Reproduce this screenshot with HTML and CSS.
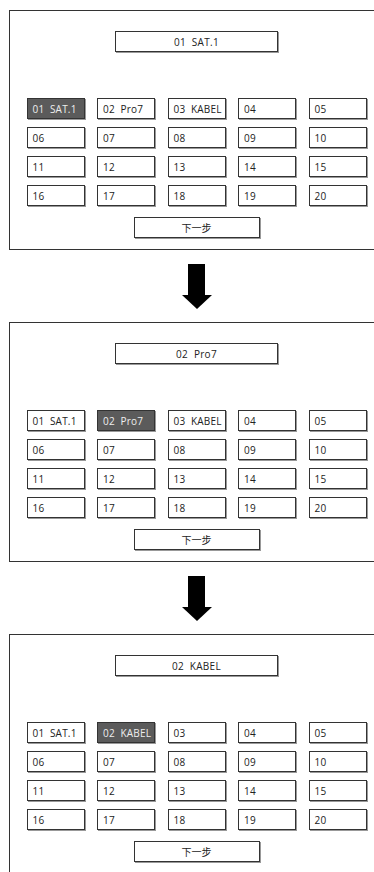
FILE: index.html
```html
<!DOCTYPE html>
<html lang="zh">
<head>
  <meta charset="UTF-8">
  <meta name="viewport" content="width=device-width, initial-scale=1.0">
  <title>频道排序</title>
  <link rel="stylesheet" href="styles.css">
</head>
<body>
  <div class="page">
    <!-- step 1 -->
    <div class="panel">
      <div class="inner">
        <div class="display">01&nbsp; SAT.1</div>
        <div class="grid">
          <div class="cell selected">01&nbsp; SAT.1</div>
          <div class="cell">02&nbsp; Pro7</div>
          <div class="cell">03&nbsp; KABEL</div>
          <div class="cell">04</div>
          <div class="cell">05</div>
          <div class="cell">06</div>
          <div class="cell">07</div>
          <div class="cell">08</div>
          <div class="cell">09</div>
          <div class="cell">10</div>
          <div class="cell">11</div>
          <div class="cell">12</div>
          <div class="cell">13</div>
          <div class="cell">14</div>
          <div class="cell">15</div>
          <div class="cell">16</div>
          <div class="cell">17</div>
          <div class="cell">18</div>
          <div class="cell">19</div>
          <div class="cell">20</div>
        </div>
        <button class="next">下一步</button>
      </div>
    </div>

    <div class="arrow">
      <svg width="30" height="45" viewBox="0 0 30 45">
        <rect x="6" y="0" width="17" height="32" fill="#000"/>
        <polygon points="0,31 30,31 15,45" fill="#000"/>
      </svg>
    </div>

    <!-- step 2 -->
    <div class="panel">
      <div class="inner">
        <div class="display">02&nbsp; Pro7</div>
        <div class="grid">
          <div class="cell">01&nbsp; SAT.1</div>
          <div class="cell selected">02&nbsp; Pro7</div>
          <div class="cell">03&nbsp; KABEL</div>
          <div class="cell">04</div>
          <div class="cell">05</div>
          <div class="cell">06</div>
          <div class="cell">07</div>
          <div class="cell">08</div>
          <div class="cell">09</div>
          <div class="cell">10</div>
          <div class="cell">11</div>
          <div class="cell">12</div>
          <div class="cell">13</div>
          <div class="cell">14</div>
          <div class="cell">15</div>
          <div class="cell">16</div>
          <div class="cell">17</div>
          <div class="cell">18</div>
          <div class="cell">19</div>
          <div class="cell">20</div>
        </div>
        <button class="next">下一步</button>
      </div>
    </div>

    <div class="arrow">
      <svg width="30" height="45" viewBox="0 0 30 45">
        <rect x="6" y="0" width="17" height="32" fill="#000"/>
        <polygon points="0,31 30,31 15,45" fill="#000"/>
      </svg>
    </div>

    <!-- step 3 -->
    <div class="panel">
      <div class="inner">
        <div class="display">02&nbsp; KABEL</div>
        <div class="grid">
          <div class="cell">01&nbsp; SAT.1</div>
          <div class="cell selected">02&nbsp; KABEL</div>
          <div class="cell">03</div>
          <div class="cell">04</div>
          <div class="cell">05</div>
          <div class="cell">06</div>
          <div class="cell">07</div>
          <div class="cell">08</div>
          <div class="cell">09</div>
          <div class="cell">10</div>
          <div class="cell">11</div>
          <div class="cell">12</div>
          <div class="cell">13</div>
          <div class="cell">14</div>
          <div class="cell">15</div>
          <div class="cell">16</div>
          <div class="cell">17</div>
          <div class="cell">18</div>
          <div class="cell">19</div>
          <div class="cell">20</div>
        </div>
        <button class="next">下一步</button>
      </div>
    </div>
  </div>
</body>
</html>
```

FILE: styles.css
```css
html, body {
    margin: 0;
    padding: 0;
    overflow: hidden;
    background-color: white;
}

body {
    font-family: "Open Sans", "Noto Sans CJK SC", sans-serif;
    color: #222;
}

.page {
    padding-top: 10px;
    padding-left: 9px;
}

/* the right edge of each panel is cut off by the window */
.panel {
    box-sizing: border-box;
    border: 1px solid #333;
    border-right: none;
    padding: 20px 0 11px 16px;
}

.inner {
    width: 341px;
    display: flex;
    flex-direction: column;
    align-items: center;
}

.display {
    width: 163px;
    height: 21px;
    box-sizing: border-box;
    border: 1px solid #333;
    box-shadow: 1px 1px 0 #999;
    font-size: 10px;
    letter-spacing: 0.3px;
    display: flex;
    align-items: center;
    justify-content: center;
}

.grid {
    margin-top: 46px;
    display: grid;
    grid-template-columns: repeat(5, 58px);
    grid-auto-rows: 21px;
    column-gap: 12.5px;
    row-gap: 8px;
}

.cell {
    box-sizing: border-box;
    border: 1px solid #333;
    box-shadow: 1px 1px 0 #999;
    padding-left: 5px;
    font-size: 10px;
    letter-spacing: 0.2px;
    display: flex;
    align-items: center;
    white-space: nowrap;
}

.cell.selected {
    background-color: #5b5b5b;
    color: #eee;
}

.next {
    margin-top: 11px;
    width: 126px;
    height: 21px;
    box-sizing: border-box;
    border: 1px solid #333;
    box-shadow: 1px 1px 0 #999;
    border-radius: 0;
    background-color: white;
    font-family: "Noto Sans CJK SC", sans-serif;
    font-size: 10px;
    color: #222;
    padding: 0;
}

.arrow {
    width: 341px;
    height: 72px;
    box-sizing: border-box;
    margin-left: 17px;
    padding-top: 14px;
    display: flex;
    justify-content: center;
}

.arrow svg {
    display: block;
}
```
